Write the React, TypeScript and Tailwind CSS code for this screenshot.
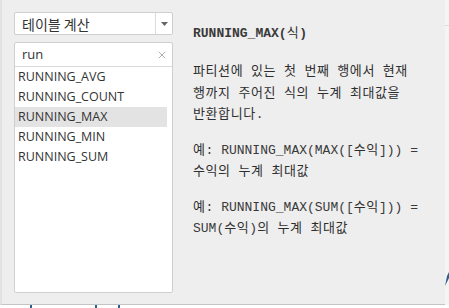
import { X } from 'lucide-react';

const items = ['RUNNING_AVG', 'RUNNING_COUNT', 'RUNNING_MAX', 'RUNNING_MIN', 'RUNNING_SUM'];

// Hangul runs use the CJK font, everything else stays in the mono face
function Mixed({ text }: { text: string }) {
  const parts = text.split(/([\uAC00-\uD7A3]+)/);
  return (
    <>
      {parts.map((p, i) =>
        /[\uAC00-\uD7A3]/.test(p) ? (
          <span key={i} className="font-['Noto_Sans_CJK_KR',sans-serif] text-[13px] tracking-[0.6px] font-normal text-[#2e2e2e]">
            {p}
          </span>
        ) : (
          <span key={i}>{p}</span>
        )
      )}
    </>
  );
}

function Para({ lines, className = '' }: { lines: string[]; className?: string }) {
  return (
    <div className={className}>
      {lines.map((l, i) => (
        <div key={i} className="whitespace-pre">
          <Mixed text={l} />
        </div>
      ))}
    </div>
  );
}

export default function App() {
  return (
    <div className="relative w-[449px] h-[308px] bg-white overflow-hidden">
      {/* outer right strip */}
      <div className="absolute right-0 top-0 w-[4px] h-[305px] bg-[#f4f4f4]">
        <div className="mt-[25px] h-px bg-[#dcdcdc]" />
      </div>

      {/* chart bits peeking out under the popup */}
      <svg className="absolute left-0 top-[303px]" width="449" height="5">
        <rect x="30" y="2" width="2" height="3" fill="#2f5f8f" />
        <rect x="95" y="2" width="2" height="3" fill="#2f5f8f" />
        <rect x="118" y="2" width="2" height="3" fill="#2f5f8f" />
      </svg>
      <svg className="absolute left-[445px] top-[272px]" width="4" height="14">
        <path d="M0 14 L2 4 L4 0 L4 6 Z" fill="#2f5f8f" />
      </svg>

      <div className="flex w-[446px] h-[305px] bg-[#eeeeee] border-l-2 border-l-[#e2e2e2] border-r border-b border-[#c4c4c4] text-[#333]">
        {/* left column */}
        <div className="w-[171px] shrink-0 pl-[12px] pt-[12px] flex flex-col">
          <div className="flex h-[23px] w-[159px] items-center bg-white border border-[#cfcfcf] rounded-[2px]">
            <div className="flex-1 pl-[7px] font-['Noto_Sans_CJK_KR',sans-serif] text-[14px] leading-none">테이블 계산</div>
            <div className="w-[17px] h-full border-l border-[#dcdcdc] flex items-center justify-center">
              <svg width="7" height="4" viewBox="0 0 7 4">
                <path d="M0 0 H7 L3.5 4 Z" fill="#666" />
              </svg>
            </div>
          </div>

          <div className="mt-[7px] w-[159px] h-[251px] bg-white border border-[#cfcfcf] rounded-[2px] flex flex-col">
            <div className="h-[24px] shrink-0 flex items-center border-b border-[#d9d9d9] pl-[7px] pr-[4px]">
              <span className="flex-1 font-['Open_Sans',sans-serif] text-[13px] leading-none">run</span>
              <X size={12} strokeWidth={1.2} className="text-[#777]" />
            </div>
            <div className="pr-[5px]">
              {items.map((it) => (
                <div
                  key={it}
                  className={`h-[20px] flex items-center pl-[3px] font-['Open_Sans',sans-serif] text-[12.5px] ${
                    it === 'RUNNING_MAX' ? 'bg-[#e3e3e3]' : ''
                  }`}
                >
                  {it}
                </div>
              ))}
            </div>
          </div>
        </div>

        {/* right column */}
        <div className="flex-1 pl-[20px] pt-[22px] font-['Liberation_Mono',monospace] text-[13px] leading-[19.5px] text-[#3a3a3a]">
          <Para lines={['RUNNING_MAX(식)']} className="font-bold" />
          <Para
            className="mt-[16.5px]"
            lines={['파티션에 있는 첫 번째 행에서 현재', '행까지 주어진 식의 누계 최대값을', '반환합니다.']}
          />
          <Para className="mt-[14px]" lines={['예: RUNNING_MAX(MAX([수익])) =', '수익의 누계 최대값']} />
          <Para className="mt-[14px]" lines={['예: RUNNING_MAX(SUM([수익])) =', 'SUM(수익)의 누계 최대값']} />
        </div>
      </div>
    </div>
  );
}
